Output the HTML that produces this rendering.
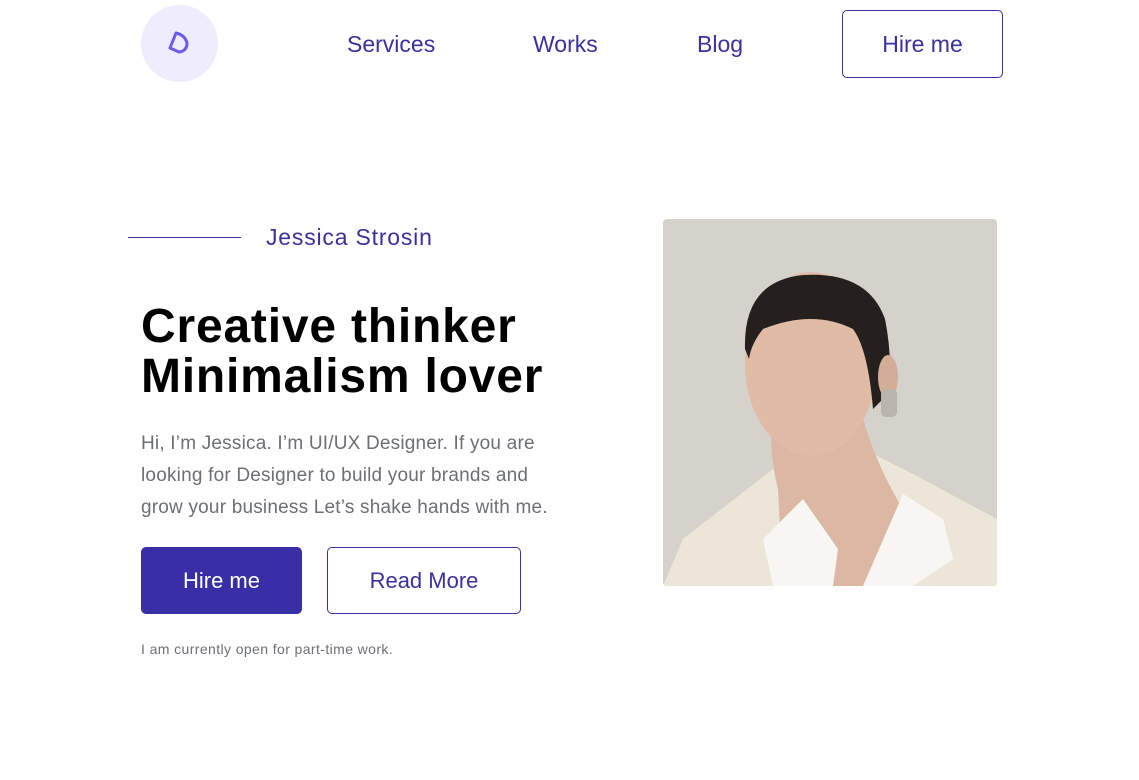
<!DOCTYPE html>
<html><head><meta charset="utf-8"><style>
*{margin:0;padding:0;box-sizing:border-box}
body{width:1139px;height:780px;background:#fff;font-family:"Liberation Sans",Arial,sans-serif;position:relative;overflow:hidden}
.a{position:absolute}
.nav{color:#3a31a0;font-size:23px}
</style></head><body>
<div class="a" style="left:141px;top:5px;width:77px;height:77px;border-radius:50%;background:#efecfd"></div>
<svg class="a" style="left:165px;top:30px" width="28" height="26" viewBox="0 0 28 26"><path d="M11 3 L5 18 L14 22 Q22 21 22 13 Q20 5 11 3 Z" fill="none" stroke="#6b5cf0" stroke-width="3" stroke-linejoin="round"/></svg>
<div class="a nav" style="left:347px;top:31px">Services</div>
<div class="a nav" style="left:533px;top:31px">Works</div>
<div class="a nav" style="left:697px;top:31px">Blog</div>
<div class="a nav" style="left:842px;top:10px;width:161px;height:68px;border:1px solid #3a31a0;border-radius:5px;text-align:center;line-height:66px">Hire me</div>
<div class="a" style="left:128px;top:237px;width:113px;height:1px;background:#3a31a0"></div>
<div class="a" style="left:266px;top:224px;font-size:23px;color:#3a31a0;letter-spacing:0.8px">Jessica Strosin</div>
<div class="a" style="left:141px;top:302px;font-size:48px;font-weight:bold;line-height:50px;color:#000;letter-spacing:0.8px">Creative thinker<br>Minimalism lover</div>
<div class="a" style="left:141px;top:428px;font-size:19px;line-height:32px;color:#6b6f76;width:425px;letter-spacing:0.2px">Hi, I’m Jessica. I’m UI/UX Designer. If you are looking for Designer to build your brands and grow your business Let’s shake hands with me.</div>
<div class="a" style="left:141px;top:547px;width:161px;height:67px;background:#382ea6;border-radius:5px;color:#fff;font-size:22px;text-align:center;line-height:67px">Hire me</div>
<div class="a" style="left:327px;top:547px;width:194px;height:67px;border:1px solid #3a31a0;border-radius:5px;color:#3a31a0;font-size:22px;text-align:center;line-height:65px">Read More</div>
<div class="a" style="left:141px;top:641px;font-size:14px;color:#6b6f76;letter-spacing:0.4px">I am currently open for part-time work.</div>
<svg class="a" style="left:663px;top:219px;border-radius:4px" width="334" height="367" viewBox="0 0 334 367">
<rect width="334" height="367" fill="#d5d2cc"/>
<path d="M110 250 L160 230 L200 230 L250 255 L334 300 L334 367 L0 367 L20 320 Z" fill="#ece6d8"/>
<path d="M115 270 Q105 230 110 200 L200 200 Q215 250 240 290 L230 367 L120 367 Z" fill="#dcb8a4"/>
<ellipse cx="148" cy="145" rx="66" ry="92" fill="#e0bba6"/>
<path d="M82 130 Q80 62 140 56 Q205 52 222 100 Q230 140 225 175 L210 190 Q205 130 190 110 Q150 90 100 110 Q88 125 86 140 Z" fill="#25201d"/>
<ellipse cx="225" cy="158" rx="10" ry="22" fill="#d4ad99"/>
<rect x="218" y="170" width="16" height="28" rx="5" fill="#b9b5ad"/>
<path d="M140 280 L175 330 L170 367 L110 367 L100 320 Z M240 275 L280 300 L290 340 L250 367 L200 367 Z" fill="#f8f6f3"/>
</svg>
</body></html>
